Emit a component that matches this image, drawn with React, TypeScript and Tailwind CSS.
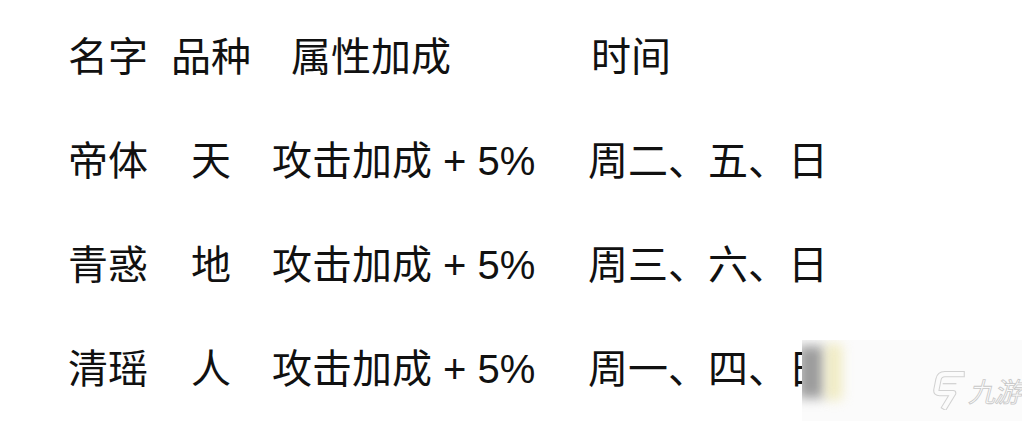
export default function App() {
  const rows = [
    ["帝体", "天", "周二、五、日"],
    ["青惑", "地", "周三、六、日"],
    ["清瑶", "人", "周一、四、日"],
  ];
  return (
    <div className="relative w-[1022px] h-[421px] bg-white overflow-hidden text-[#111] font-['Noto_Sans_CJK_SC','Noto_Sans_CJK_JP',sans-serif] font-normal text-[40px]">
      <div className="pt-[2px] pl-[68px]">
        <div className="grid grid-cols-[103px_80px_337px_1fr] leading-[104px] whitespace-pre">
          <div>名字</div>
          <div className="text-center">品种</div>
          <div className="pl-[40px]">属性加成</div>
          <div className="pl-[3px]">时间</div>
          {rows.map((r) => (
            <>
              <div key={r[0] + "a"}>{r[0]}</div>
              <div key={r[0] + "b"} className="text-center">{r[1]}</div>
              <div key={r[0] + "c"} className="pl-[21px]">
                攻击加成
                <span className="font-['Liberation_Sans',sans-serif] leading-none"> + 5%</span>
              </div>
              <div key={r[0] + "d"}>{r[2]}</div>
            </>
          ))}
        </div>
      </div>

      {/* watermark overlay */}
      <div className="absolute left-[802px] top-[340px] w-[220px] h-[81px] bg-[#fbfbfb] overflow-hidden">
        <div className="absolute left-[-4px] top-[6px] w-[26px] h-[52px] bg-[#9c9c9c] blur-[6px]" />
        <div className="absolute left-[24px] top-[4px] w-[16px] h-[56px] bg-[#eee8b4] blur-[6px] opacity-80" />
      </div>
      <div className="absolute left-[933px] top-[370px] flex items-start gap-[3px]">
        <svg width="32" height="40" viewBox="0 0 30 38" fill="none">
          <path
            d="M27 4 L11 4 Q6 4 5 9 L3 19 Q2.5 22 6 22 L19 22 L11 35"
            stroke="#d2d2d2"
            strokeWidth="6"
            strokeLinejoin="round"
            strokeLinecap="square"
          />
          <path
            d="M27 4 L11 4 Q6 4 5 9 L3 19 Q2.5 22 6 22 L19 22 L11 35"
            stroke="#fbfbfb"
            strokeWidth="4"
            strokeLinejoin="round"
            strokeLinecap="square"
          />
          <path d="M9 13 L22 13" stroke="#d2d2d2" strokeWidth="1.2" />
        </svg>
        <span className="mt-[6px] text-[27px] leading-[30px] italic font-normal text-transparent [-webkit-text-stroke:0.8px_#c8c8c8] tracking-[-1px]">
          九游
        </span>
      </div>
    </div>
  );
}
